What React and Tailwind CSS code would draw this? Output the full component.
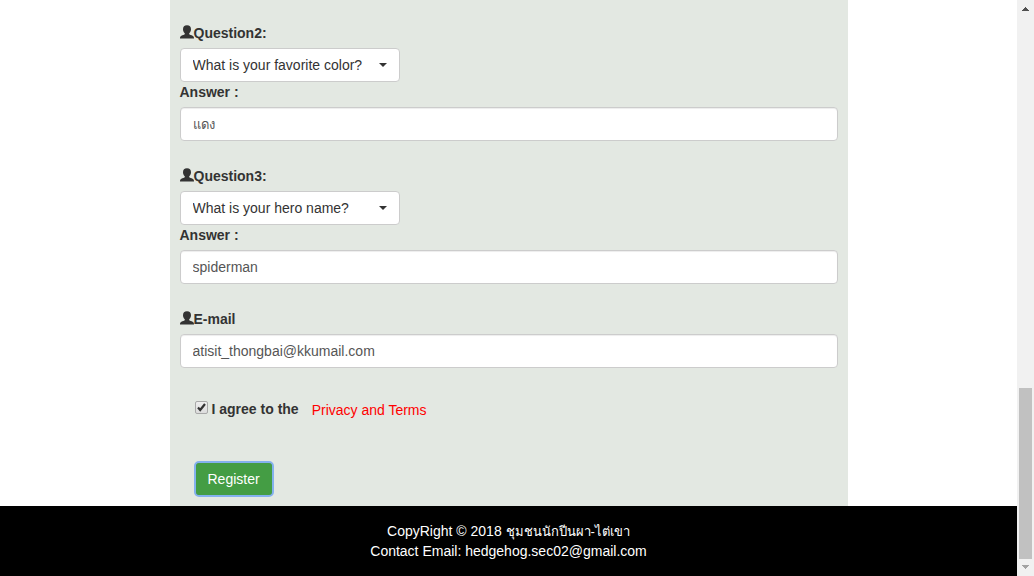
import React from "react";

function UserIcon() {
  return (
    <svg className="-mt-0.5 h-[14px] w-[14px] shrink-0" viewBox="0 0 14 14" fill="currentColor" aria-hidden="true">
      <path d="M7 0.2C9.7 0.2 11 1.8 11 4.2C11 6 10.2 7.2 9.4 8.1C9 8.6 9.1 9.3 9.6 9.6C10.8 10.2 12.6 10.6 13.3 11.3C13.9 11.9 14 12.5 14 13.6H0C0 12.5 0.1 11.9 0.7 11.3C1.4 10.6 3.2 10.2 4.4 9.6C4.9 9.3 5 8.6 4.6 8.1C3.8 7.2 3 6 3 4.2C3 1.8 4.3 0.2 7 0.2Z" />
    </svg>
  );
}

function TextField({ id, type = "text", value, size = "text-sm" }) {
  return (
    <input
      id={id}
      type={type}
      defaultValue={value}
      className={`block h-[34px] w-full rounded border border-[#cccccc] bg-white px-3 text-[#555555] shadow-[inset_0_1px_1px_rgba(0,0,0,0.075)] outline-none ${size}`}
    />
  );
}

function Question({ number, choice, answer, answerSize }) {
  const selectId = `question${number}`;
  const answerId = `answer${number}`;
  return (
    <div className="mb-[25px]">
      <label htmlFor={selectId} className="mb-[5px] flex items-center font-bold">
        <UserIcon />
        Question{number}:
      </label>
      <div className="relative w-[220px] max-w-full">
        <select
          id={selectId}
          defaultValue={choice}
          className="block h-[34px] w-full appearance-none rounded border border-[#cccccc] bg-white pl-3 pr-6 text-sm text-[#333333]"
        >
          <option>What is your favorite color?</option>
          <option>What is your hero name?</option>
        </select>
        <svg
          className="pointer-events-none absolute right-[13px] top-[15px] h-1 w-2"
          viewBox="0 0 8 4"
          fill="#333333"
          aria-hidden="true"
        >
          <path d="M0 0H8L4 4Z" />
        </svg>
      </div>
      <label htmlFor={answerId} className="mb-[5px] block font-bold">
        Answer :
      </label>
      <TextField id={answerId} value={answer} size={answerSize} />
    </div>
  );
}

function Scrollbar() {
  return (
    <div className="flex w-[17px] shrink-0 flex-col items-center bg-[#f1f1f1]" aria-hidden="true">
      <svg className="h-[17px] w-[17px]" viewBox="0 0 17 17" fill="#505050" shapeRendering="crispEdges">
        <path d="M8 7h1v1h1v1h1v1h1v1H5v-1h1V9h1V8h1z" />
      </svg>
      <div className="mt-auto h-[171px] w-[13px] bg-[#c1c1c1]" />
      <svg className="h-[17px] w-[17px]" viewBox="0 0 17 17" fill="#a3a3a3" shapeRendering="crispEdges">
        <path d="M5 6h7v1h-1v1h-1v1H9v1H8V9H7V8H6V7H5z" />
      </svg>
    </div>
  );
}

export default function App() {
  return (
    <div className="flex min-h-screen bg-white font-['Liberation_Sans',Arial,sans-serif] text-sm leading-5 text-[#333333]">
      <div className="flex min-w-0 flex-1 flex-col">
        <main className="mx-auto w-2/3 flex-1 bg-[#e3e8e2] px-2.5 pb-2.5 pt-[23px]">
          <form onSubmit={(event) => event.preventDefault()}>
            <Question number={2} choice="What is your favorite color?" answer="แดง" answerSize="text-[13px]" />
            <Question number={3} choice="What is your hero name?" answer="spiderman" />
            <label htmlFor="email" className="mb-[5px] flex items-center font-bold">
              <UserIcon />
              E-mail
            </label>
            <TextField id="email" type="email" value="atisit_thongbai@kkumail.com" />
            <div className="px-[15px] pt-[31px]">
              <div className="flex items-end gap-[13px]">
                <label className="flex items-start gap-1 pb-px font-bold">
                  <span className="relative mt-0.5 flex">
                    <input
                      type="checkbox"
                      defaultChecked
                      className="peer h-[13px] w-[13px] appearance-none rounded-xs border border-[#a9a9a9] bg-linear-to-b from-[#eeeeee] to-[#dddddd]"
                    />
                    <svg
                      className="pointer-events-none absolute inset-0 hidden h-[13px] w-[13px] peer-checked:block"
                      viewBox="0 0 13 13"
                      fill="none"
                      stroke="#333333"
                      strokeWidth="2.2"
                      aria-hidden="true"
                    >
                      <path d="M3 6.6L5.2 9L10 3" />
                    </svg>
                  </span>
                  I agree to the
                </label>
                <a href="#terms" className="text-[#ff0000]">
                  Privacy and Terms
                </a>
              </div>
              <button
                type="submit"
                className="mt-[42px] block h-[34px] rounded border border-[#398439] bg-[#449d44] px-3 text-white outline-2 outline-[#84b1ee] -outline-offset-1"
              >
                Register
              </button>
            </div>
          </form>
        </main>
        <footer className="bg-black py-[15px] text-center text-white">
          <p>
            CopyRight © 2018 <span className="text-[13px] leading-none">ชุมชนนักปีนผา-ไต่เขา</span>
          </p>
          <p>Contact Email: hedgehog.sec02@gmail.com</p>
        </footer>
      </div>
      <Scrollbar />
    </div>
  );
}
